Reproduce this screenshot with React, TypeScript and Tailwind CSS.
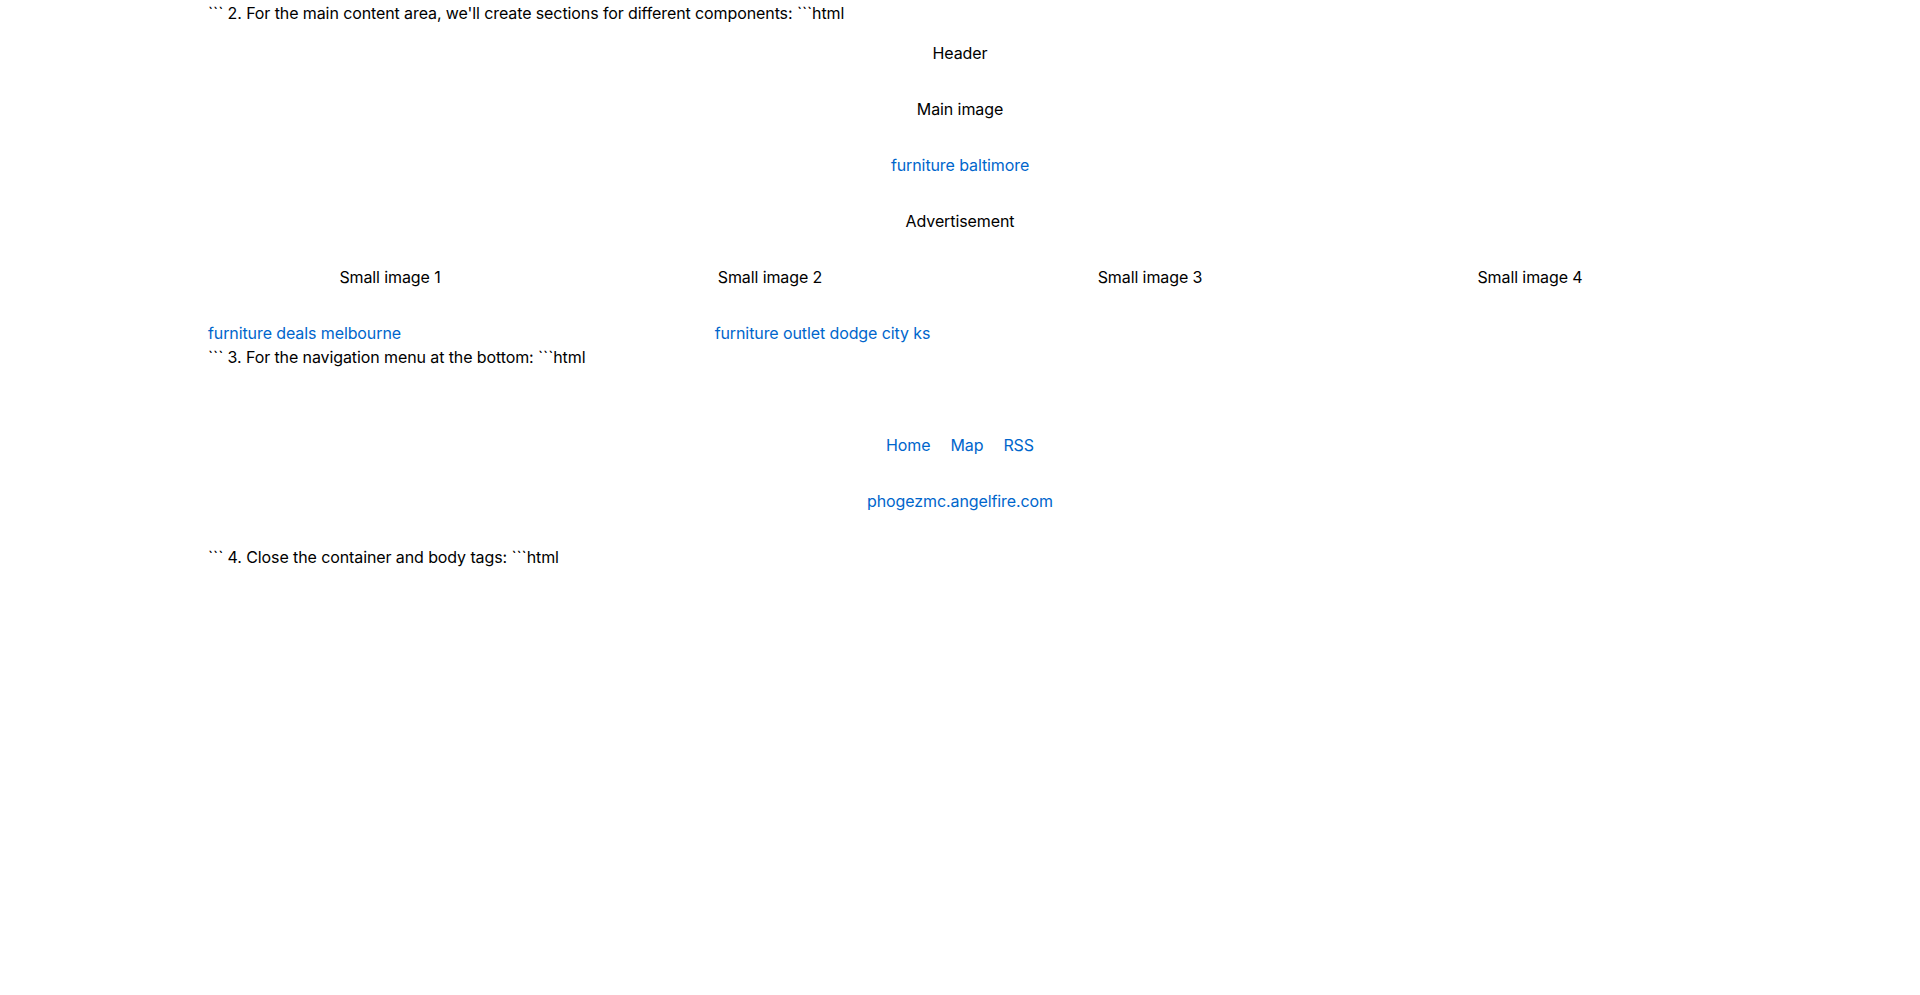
export default function App() {
  const smallImages = ["Small image 1", "Small image 2", "Small image 3", "Small image 4"];
  return (
    <div className="min-h-[995px] bg-white pt-px text-black text-base leading-6 tracking-[-0.1px] font-['Inter','Liberation_Sans',sans-serif]">
      <div className="mx-auto w-[1504px]">
        <p>``` 2. For the main content area, we'll create sections for different components: ```html</p>

        <div className="py-4 text-center">Header</div>
        <div className="py-4 text-center">Main image</div>
        <div className="py-4 text-center">
          <a href="#" className="text-[#0066cc]">furniture baltimore</a>
        </div>
        <div className="py-4 text-center">Advertisement</div>

        <div className="-mx-2 grid grid-cols-4 py-4">
          {smallImages.map((label) => (
            <div key={label} className="px-2 text-center">
              {label}
            </div>
          ))}
        </div>

        <div className="-mx-2 grid grid-cols-3 pt-4">
          <div className="px-2">
            <a href="#" className="text-[#0066cc]">furniture deals melbourne</a>
          </div>
          <div className="px-2">
            <a href="#" className="text-[#0066cc]">furniture outlet dodge city ks</a>
          </div>
          <div className="px-2" />
        </div>

        <p>``` 3. For the navigation menu at the bottom: ```html</p>

        <nav className="mt-12 flex justify-center gap-5 py-4">
          <a href="#" className="text-[#0066cc]">Home</a>
          <a href="#" className="text-[#0066cc]">Map</a>
          <a href="#" className="text-[#0066cc]">RSS</a>
        </nav>
        <div className="py-4 text-center">
          <a href="#" className="text-[#0066cc]">phogezmc.angelfire.com</a>
        </div>

        <p className="mt-4">``` 4. Close the container and body tags: ```html</p>
      </div>
    </div>
  );
}
